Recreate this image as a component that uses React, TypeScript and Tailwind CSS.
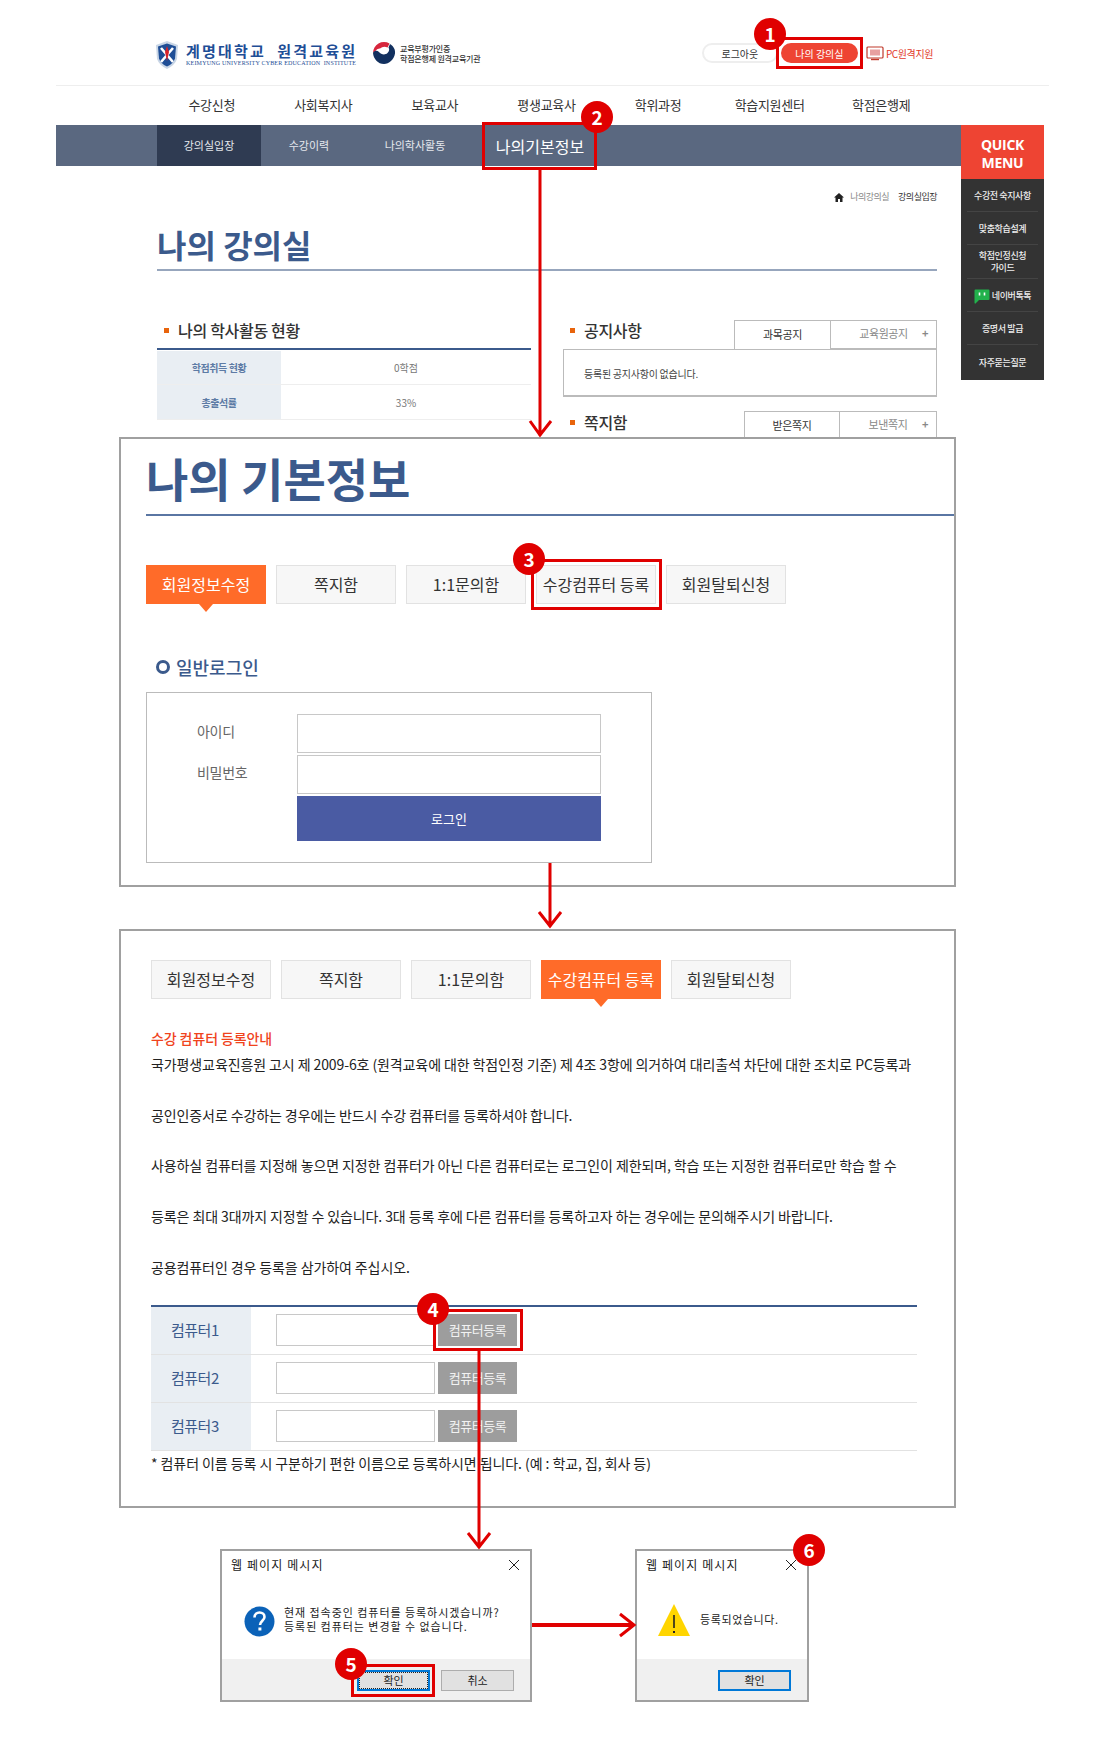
import { ReactNode } from 'react';

const font = '[font-family:"Noto_Sans_CJK_KR","Noto_Sans",sans-serif]';

const navItems = ['수강신청', '사회복지사', '보육교사', '평생교육사', '학위과정', '학습지원센터', '학점은행제'];
const accountTabs = ['회원정보수정', '쪽지함', '1:1문의함', '수강컴퓨터 등록', '회원탈퇴신청'];
const notes = [
  '국가평생교육진흥원 고시 제 2009-6호 (원격교육에 대한 학점인정 기준) 제 4조 3항에 의거하여 대리출석 차단에 대한 조치로 PC등록과',
  '공인인증서로 수강하는 경우에는 반드시 수강 컴퓨터를 등록하셔야 합니다.',
  '사용하실 컴퓨터를 지정해 놓으면 지정한 컴퓨터가 아닌 다른 컴퓨터로는 로그인이 제한되며, 학습 또는 지정한 컴퓨터로만 학습 할 수',
  '등록은 최대 3대까지 지정할 수 있습니다. 3대 등록 후에 다른 컴퓨터를 등록하고자 하는 경우에는 문의해주시기 바랍니다.',
  '공용컴퓨터인 경우 등록을 삼가하여 주십시오.',
];

function Emblem() {
  return (
    <svg width="22" height="28" viewBox="0 0 22 28" className="shrink-0">
      <path d="M11 0 L22 4 L21 18 Q19 24 11 28 Q3 24 1 18 L0 4 Z" fill="#c9d6e6" />
      <path d="M11 2.5 L20 5.5 L19 17.5 Q17.5 22.5 11 25.5 Q4.5 22.5 3 17.5 L2 5.5 Z" fill="#1f4e96" />
      <path d="M5 7 L17 21 M17 7 L5 21" stroke="#fff" strokeWidth="2.6" />
      <path d="M11 5 L13 11 L11 20 L9 11 Z" fill="#d8232a" />
    </svg>
  );
}

function GovMark() {
  return (
    <svg width="24" height="24" viewBox="0 0 24 24" className="shrink-0">
      <path d="M1 12 A11 11 0 0 1 17.5 2.5 L15.6 6.6 A7 7 0 0 0 8 7.5 A4.5 4.5 0 0 0 3.5 10 Z" fill="#d7263d" />
      <path d="M1 12 C2 9.5 5 9 7 11 C9 13.5 13 14.5 15.5 12 C17.5 10 17.5 8 16.5 6.5 L18 3 C22 5.5 23.5 9 23 12.5 C22 18.5 17 23 12 23 C6 23 1.5 18 1 12 Z" fill="#12305f" />
    </svg>
  );
}

function PcIcon() {
  return (
    <svg width="18" height="15" viewBox="0 0 18 15" className="shrink-0">
      <rect x="1" y="1" width="16" height="11" rx="1" fill="#fff" stroke="#c0392b" strokeWidth="1.2" />
      <rect x="4" y="3.5" width="10" height="6" fill="#e8a0a0" />
      <path d="M5 13.5 H13" stroke="#c0392b" strokeWidth="1.4" />
    </svg>
  );
}

function TalkIcon() {
  return (
    <svg width="16" height="15" viewBox="0 0 16 15" className="shrink-0">
      <path d="M1.5 0.5 H14.5 Q15.5 0.5 15.5 1.5 V10 Q15.5 11 14.5 11 H5 L1.5 14.5 Q0.5 15 0.5 13.5 V1.5 Q0.5 0.5 1.5 0.5 Z" fill="#22b14c" />
      <path d="M5.5 3.5 V6.5 M10.5 3.5 V6.5" stroke="#fff" strokeWidth="1.6" />
    </svg>
  );
}

function SectionTitle({ children }: { children: ReactNode }) {
  return (
    <div className="flex items-center gap-[9px] pl-[7px] h-[20px]">
      <span className="w-[5px] h-[5px] bg-[#e8640c]" />
      <span className="text-[16px] leading-[20px] font-medium text-[#333] tracking-[-0.3px]">{children}</span>
    </div>
  );
}

function SmallTabs({ first, second, w1, w2 }: { first: string; second: string; w1: string; w2: string }) {
  return (
    <div className="flex h-[29px] text-[11px] tracking-[-0.4px]">
      <div className={`${w1} pb-[2px] flex items-center justify-center border border-b-0 border-[#bbb] bg-white text-[#333]`}>{first}</div>
      <div className={`${w2} pb-[2px] relative flex items-center justify-center border border-l-0 border-[#bbb] bg-white text-[#888]`}>
        {second}
        <span className="absolute right-[8px] text-[11px] font-bold leading-none text-[#888]">+</span>
      </div>
    </div>
  );
}

function AccountTabs({ active }: { active: number }) {
  return (
    <div className="flex gap-[10px]">
      {accountTabs.map((tab, i) => (
        <div
          key={tab}
          className={
            i === active
              ? 'relative w-[120px] h-[39px] pb-[2px] flex items-center justify-center bg-[#ff6b29] text-white text-[16px] whitespace-nowrap'
              : 'w-[120px] h-[39px] pb-[2px] flex items-center justify-center bg-[#f7f7f7] border border-[#e2e2e2] text-[#333] text-[16px] whitespace-nowrap'
          }
        >
          {tab}
          {i === active && <span className="absolute left-1/2 top-full -ml-[7px] border-x-[7px] border-x-transparent border-t-[8px] border-t-[#ff6b29]" />}
        </div>
      ))}
    </div>
  );
}

function ComputerRow({ n }: { n: number }) {
  return (
    <div className="flex h-[48px] border-b border-[#e2e2e2]">
      <div className="w-[100px] bg-[#e9eef3] flex items-center pl-[20px] text-[15px] text-[#3b5a8c] tracking-[-0.5px]">컴퓨터{n}</div>
      <div className="flex items-center pl-[25px] gap-[3px]">
        <div className="w-[159px] h-[32px] border border-[#c8c8c8] bg-white" />
        <div className="w-[79px] h-[32px] bg-[#9d9d9d] flex items-center justify-center text-[#f2f2f2] text-[13px] tracking-[-0.5px]">컴퓨터등록</div>
      </div>
    </div>
  );
}

function Dialog({ width, children, buttons }: { width: string; children: ReactNode; buttons: ReactNode }) {
  return (
    <div className={`${width} h-[153px] border-2 border-[#a0a0a0] bg-white flex flex-col`}>
      <div className="flex h-[28px] items-center justify-between pl-[9px] pr-[10px] text-[12px] text-[#222] tracking-[1.1px]">
        <span>웹 페이지 메시지</span>
        <svg width="12" height="12" viewBox="0 0 12 12"><path d="M1 1 L11 11 M11 1 L1 11" stroke="#222" strokeWidth="1" /></svg>
      </div>
      <div className="h-[80px] flex items-start">{children}</div>
      <div className="flex-1 bg-[#f0f0f0] flex items-start justify-end gap-[11px] pt-[11px] pr-[16px]">{buttons}</div>
    </div>
  );
}

function Overlays() {
  const badges = [
    { n: 1, cls: 'left-[754px] top-[18px]' },
    { n: 2, cls: 'left-[581px] top-[101px]' },
    { n: 3, cls: 'left-[513px] top-[543px]' },
    { n: 4, cls: 'left-[417px] top-[1293px]' },
    { n: 5, cls: 'left-[335px] top-[1648px]' },
    { n: 6, cls: 'left-[793px] top-[1534px]' },
  ];
  const boxes = [
    'left-[776px] top-[37px] w-[87px] h-[32px]',
    'left-[482px] top-[122px] w-[115px] h-[48px]',
    'left-[531px] top-[559px] w-[131px] h-[51px]',
    'left-[433px] top-[1309px] w-[90px] h-[42px]',
    'left-[351px] top-[1664px] w-[84px] h-[33px]',
  ];
  return (
    <>
      <svg width="1099" height="1750" viewBox="0 0 1099 1750" className="absolute left-0 top-0 pointer-events-none" fill="none" stroke="#e00000" strokeWidth="3">
        <path d="M540 169 V436 M530 421 L540 435 L551 421" />
        <path d="M550 863 V927 M539 912 L550 926 L561 912" />
        <path d="M479 1351 V1548 M468 1533 L479 1547 L490 1533" />
        <path d="M532 1625 H634" strokeWidth="4" />
        <path d="M620 1614 L634 1625 L620 1636" />
      </svg>
      {boxes.map(cls => (
        <div key={cls} className={`absolute border-[3px] border-[#e00000] ${cls}`} />
      ))}
      {badges.map(b => (
        <div key={b.n} className={`absolute w-[32px] h-[32px] rounded-full bg-[#e00000] text-white flex items-center justify-center text-[19px] font-bold ${b.cls}`}>{b.n}</div>
      ))}
    </>
  );
}

export default function App() {
  return (
    <div className={`relative w-[1099px] h-[1750px] overflow-hidden bg-white ${font}`}>
      {/* 나의 강의실 */}
      <section className="h-[437px] overflow-hidden">
        <div className="ml-[56px] w-[993px]">
          <header className="h-[86px] border-b border-[#eee] pl-[100px] pr-[116px] pt-[41px] flex items-start">
            <Emblem />
            <div className="ml-[8px] w-[172px] pt-[2px]">
              <div className="text-[15px] leading-[16px] font-bold text-[#1f4e96] tracking-[2.2px] whitespace-nowrap">계명대학교&nbsp; 원격교육원</div>
              <div className="text-[6px] leading-[8px] text-[#1f4e96] tracking-[0.2px] whitespace-nowrap [font-family:'Liberation_Serif',serif]">KEIMYUNG UNIVERSITY CYBER EDUCATION&nbsp; INSTITUTE</div>
            </div>
            <div className="ml-[14px]"><GovMark /></div>
            <div className="ml-[4px] text-[8px] leading-[10px] text-[#333] mt-[3px] tracking-[-0.2px] whitespace-nowrap font-medium">
              <div>교육부평가인증</div>
              <div>학점은행제 원격교육기관</div>
            </div>
            <div className="ml-auto mt-[2px] flex items-center gap-[3px]">
              <div className="w-[76px] h-[20px] rounded-full border-2 border-[#eee] flex items-center justify-center text-[10px] text-[#333]">로그아웃</div>
              <div className="w-[77px] h-[20px] rounded-full bg-[#ee4433] flex items-center justify-center text-[10px] text-white">나의 강의실</div>
              <div className="ml-[5px] flex items-center gap-[2px] text-[10px] text-[#e23a2a] tracking-[-0.4px] whitespace-nowrap"><PcIcon />PC원격지원</div>
            </div>
          </header>
          <nav className="h-[39px] pb-[2px] ml-[100px] w-[781px] grid grid-cols-7 items-center">
            {navItems.map(item => (
              <span key={item} className="text-center text-[13px] text-[#333] tracking-[-0.3px]">{item}</span>
            ))}
          </nav>
          <div className="h-[41px] w-[905px] bg-[#5a6880] pl-[101px] flex items-center text-[11px] text-[#e6e9ee]">
            <div className="w-[104px] h-full bg-[#2f3b52] flex items-center justify-center">강의실입장</div>
            <div className="w-[96px] text-center">수강이력</div>
            <div className="w-[116px] text-center">나의학사활동</div>
            <div className="w-[134px] text-center text-[16px] text-white">나의기본정보</div>
          </div>
          <div className="ml-[101px] w-[780px]">
            <div className="mt-[25px] h-[12px] flex items-center justify-end gap-[6px] text-[9px] tracking-[-0.5px]">
              <svg width="10" height="9" viewBox="0 0 10 9"><path d="M5 0 L10 4.5 H8.5 V9 H6 V6 H4 V9 H1.5 V4.5 H0 Z" fill="#222" /></svg>
              <span className="text-[#888]">나의강의실</span>
              <span className="ml-[3px] text-[#333]">강의실입장</span>
            </div>
            <h1 className="mt-[22px] h-[46px] border-b-2 border-[#97a6bd] text-[32px] leading-[38px] font-bold text-[#3b5a8c]">나의 강의실</h1>
            <div className="mt-[49px] grid grid-cols-[374px_374px] gap-x-[32px]">
              <div>
                <div className="h-[30px] border-b-2 border-[#3b5a8c]"><SectionTitle>나의 학사활동 현황</SectionTitle></div>
                <div className="mt-[1px] flex h-[34px] border-b border-[#eee] text-[10px]">
                  <div className="w-[124px] bg-[#e9eef3] flex items-center justify-center font-bold text-[#5d7ba5] tracking-[-0.4px]">학점취득 현황</div>
                  <div className="flex-1 flex items-center justify-center text-[#777]">0학점</div>
                </div>
                <div className="flex h-[35px] border-b border-[#eee] text-[10px]">
                  <div className="w-[124px] bg-[#e9eef3] flex items-center justify-center font-bold text-[#5d7ba5] tracking-[-0.4px]">총출석률</div>
                  <div className="flex-1 flex items-center justify-center text-[#777]">33%</div>
                </div>
              </div>
              <div>
                <div className="flex justify-between"><SectionTitle>공지사항</SectionTitle><SmallTabs first="과목공지" second="교육원공지" w1="w-[97px]" w2="w-[106px]" /></div>
                <div className="h-[48px] pt-[2px] border border-b-2 border-[#bbb] flex items-center pl-[20px] text-[10px] text-[#444] tracking-[-0.25px]">등록된 공지사항이 없습니다.</div>
                <div className="mt-[14px] flex justify-between"><div className="pt-[1px]"><SectionTitle>쪽지함</SectionTitle></div><SmallTabs first="받은쪽지" second="보낸쪽지" w1="w-[96px]" w2="w-[97px]" /></div>
              </div>
            </div>
          </div>
        </div>
      </section>

      {/* 퀵메뉴 */}
      <aside className="absolute left-[961px] top-[125px] w-[83px]">
        <div className="h-[54px] pt-[3px] bg-[#ee4433] flex items-center justify-center text-center text-white text-[14px] leading-[18px] font-bold [font-family:'Open_Sans',sans-serif] tracking-[-0.3px]">QUICK<br />MENU</div>
        <div className="bg-[#333] px-[6px] text-[9px] leading-[12px] text-[#eee] font-medium tracking-[-0.4px] text-center">
          <div className="h-[33px] pt-[2px] flex items-center justify-center border-b border-[#444]">수강전 숙지사항</div>
          <div className="h-[33px] pt-[2px] flex items-center justify-center border-b border-[#444]">맞춤학습설계</div>
          <div className="h-[34px] pt-[1px] flex items-center justify-center border-b border-[#444]">학점인정신청<br />가이드</div>
          <div className="h-[33px] pt-[2px] flex items-center justify-center gap-[2px] border-b border-[#444]"><TalkIcon />네이버톡톡</div>
          <div className="h-[33px] pt-[2px] flex items-center justify-center border-b border-[#444]">증명서 발급</div>
          <div className="h-[35px] flex items-center justify-center">자주묻는질문</div>
        </div>
      </aside>

      {/* 나의 기본정보 */}
      <section className="ml-[119px] w-[837px] h-[450px] border-2 border-[#a0a0a0] bg-white pl-[25px]">
        <h2 className="h-[75px] pt-[10px] text-[46px] leading-[56px] font-bold text-[#3b5a8c]">나의 기본정보</h2>
        <div className="h-[2px] bg-[#5a76a3]" />
        <div className="mt-[49px]"><AccountTabs active={0} /></div>
        <div className="mt-[50px] flex items-center gap-[6px] h-[26px] pl-[10px]">
          <span className="w-[14px] h-[14px] rounded-full border-[3px] border-[#3b5a8c]" />
          <span className="text-[18px] font-medium text-[#3b5a8c]">일반로그인</span>
        </div>
        <div className="mt-[12px] w-[506px] h-[171px] border border-[#bbb] pt-[21px] pl-[50px] flex">
          <div className="w-[100px] text-[14px] text-[#666]">
            <div className="h-[41px] -mt-[3px] flex items-center tracking-[-0.3px]">아이디</div>
            <div className="h-[41px] flex items-center tracking-[-0.3px]">비밀번호</div>
          </div>
          <div className="w-[304px] flex flex-col gap-[2px]">
            <div className="h-[39px] border border-[#c8c8c8] bg-white" />
            <div className="h-[39px] border border-[#c8c8c8] bg-white" />
            <div className="h-[45px] bg-[#4a5ba3] flex items-center justify-center text-[13px] text-white">로그인</div>
          </div>
        </div>
      </section>

      {/* 수강컴퓨터 등록 */}
      <section className="mt-[42px] ml-[119px] w-[837px] h-[579px] border-2 border-[#a0a0a0] bg-white pl-[30px]">
        <div className="pt-[29px]"><AccountTabs active={3} /></div>
        <h3 className="mt-[29px] h-[20px] text-[14px] leading-[20px] font-medium text-[#f0431c] tracking-[-0.1px]">수강 컴퓨터 등록안내</h3>
        <div className="mt-[-9px] w-[790px] text-[14px] leading-[50.7px] text-[#222] tracking-[-0.1px] whitespace-nowrap">
          {notes.map(line => <p key={line}>{line}</p>)}
        </div>
        <div className="mt-[12px] w-[766px] border-t-2 border-[#3b5a8c]">
          <ComputerRow n={1} />
          <ComputerRow n={2} />
          <ComputerRow n={3} />
        </div>
        <p className="mt-[1px] text-[14px] leading-[22px] text-[#222] tracking-[-0.07px]">* 컴퓨터 이름 등록 시 구분하기 편한 이름으로 등록하시면 됩니다. (예 : 학교, 집, 회사 등)</p>
      </section>

      {/* 확인 대화상자 */}
      <section className="mt-[41px] ml-[220px] flex gap-[103px]">
        <Dialog
          width="w-[312px]"
          buttons={
            <>
              <div className="w-[73px] h-[21px] border-2 border-[#0078d7] bg-[#e1e1e1] flex items-center justify-center text-[11px] text-[#222] outline-1 outline-dotted -outline-offset-3 outline-[#222]">확인</div>
              <div className="w-[73px] h-[21px] border border-[#adadad] bg-[#e1e1e1] flex items-center justify-center text-[11px] text-[#222]">취소</div>
            </>
          }
        >
          <svg width="31" height="31" viewBox="0 0 31 31" className="ml-[22px] mt-[27px] shrink-0">
            <circle cx="15.5" cy="15.5" r="15" fill="#0b62b8" />
            <path d="M10.5 11.5 C10.5 8 13 6.5 15.5 6.5 C18.5 6.5 20.5 8.5 20.5 11 C20.5 14.5 16 15 16 19" stroke="#fff" strokeWidth="2.6" fill="none" />
            <rect x="14.4" y="21.5" width="3" height="3" fill="#fff" />
          </svg>
          <div className="ml-[9px] mt-[26px] text-[11px] leading-[14px] text-[#222] tracking-[0.95px] whitespace-nowrap">
            <div>현재 접속중인 컴퓨터를 등록하시겠습니까?</div>
            <div>등록된 컴퓨터는 변경할 수 없습니다.</div>
          </div>
        </Dialog>
        <Dialog
          width="w-[174px]"
          buttons={<div className="w-[73px] h-[21px] border-2 border-[#0078d7] bg-[#e1e1e1] flex items-center justify-center text-[11px] text-[#222]">확인</div>}
        >
          <svg width="32" height="32" viewBox="0 0 32 32" className="ml-[21px] mt-[25px] shrink-0">
            <path d="M16 0 L32 32 H0 Z" fill="#ffd500" />
            <path d="M16 11 V24" stroke="#222" strokeWidth="1.6" />
            <rect x="15" y="27" width="2" height="2" fill="#222" />
          </svg>
          <div className="ml-[10px] mt-[33px] text-[11px] leading-[14px] text-[#222] tracking-[0.6px] whitespace-nowrap">등록되었습니다.</div>
        </Dialog>
      </section>

      <Overlays />
    </div>
  );
}
